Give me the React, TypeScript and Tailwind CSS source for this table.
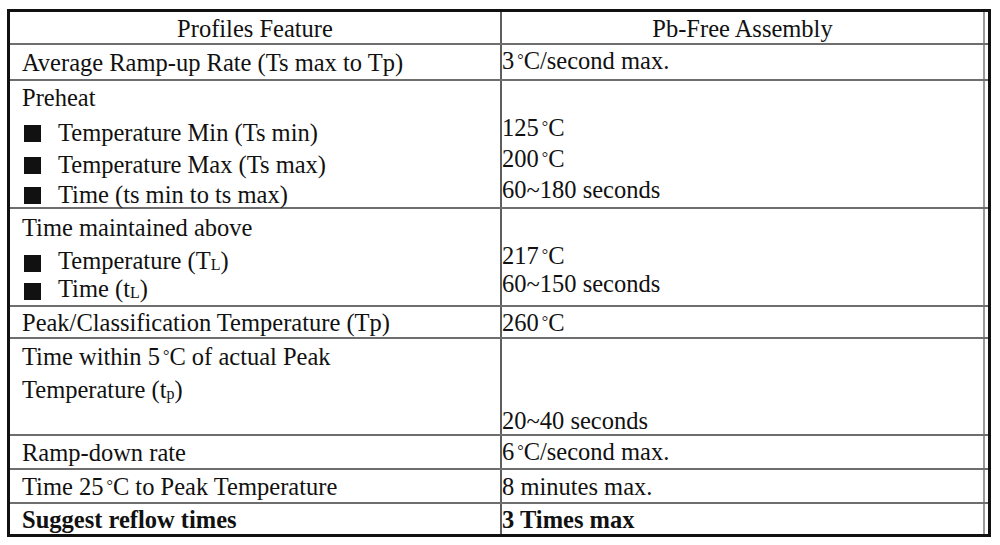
import React from "react";

const Deg = () => (
  <span className="pl-[3px]">
    <span className="text-[16px] relative -top-[4px]">°</span>
    <span>C</span>
  </span>
);

const Sub = ({ children }: { children: React.ReactNode }) => (
  <span className="text-[16px] relative top-[1px]">{children}</span>
);

const Bullet = ({ children }: { children: React.ReactNode }) => (
  <span className="flex items-center">
    <span className="inline-block w-[17px] h-[17px] bg-[#111] ml-[2px] mr-[17px] mt-[1px]" />
    <span>{children}</span>
  </span>
);

type Line = { h: number; c?: React.ReactNode };

const Cell = ({
  pt,
  lines,
  className,
}: {
  pt: number;
  lines: Line[];
  className?: string;
}) => (
  <div className={className}>
    <div style={{ height: pt }} />
    {lines.map((l, i) => (
      <div key={i} className="leading-[32px] whitespace-nowrap" style={{ height: l.h }}>
        {l.c}
      </div>
    ))}
  </div>
);

const Row = ({
  h,
  last,
  left,
  right,
}: {
  h: number;
  last?: boolean;
  left: { pt: number; lines: Line[] };
  right: { pt: number; lines: Line[] };
}) => (
  <div
    className={`flex ${last ? "" : "border-b-2 border-[#6e6e6e]"}`}
    style={{ height: h }}
  >
    <Cell
      pt={left.pt}
      lines={left.lines}
      className="w-[492px] shrink-0 border-r-2 border-[#5e5e5e] pl-[12px]"
    />
    <Cell
      pt={right.pt}
      lines={right.lines}
      className="flex-1 mr-[3px] border-r-2 border-[#9a9a9a]"
    />
  </div>
);

export default function App() {
  return (
    <div
      className="w-[1000px] h-[545px] bg-white pt-[9px] pl-[7px] text-[#111] text-[24.5px]"
      style={{ fontFamily: '"Liberation Serif", "Times New Roman", serif' }}
    >
      <div className="w-[984px] h-[528px] border-[3px] border-[#111] flex flex-col">
        {/* header */}
        <div className="flex border-b-2 border-[#6e6e6e] h-[33px]">
          <div className="w-[492px] shrink-0 border-r-2 border-[#5e5e5e] text-center leading-[32px] pt-[1px]">
            Profiles Feature
          </div>
          <div className="flex-1 mr-[3px] border-r-2 border-[#9a9a9a] text-center leading-[32px] pt-[1px]">
            Pb-Free Assembly
          </div>
        </div>
        <Row
          h={36}
          left={{ pt: 2, lines: [{ h: 32, c: "Average Ramp-up Rate (Ts max to Tp)" }] }}
          right={{ pt: 0, lines: [{ h: 32, c: <>3<Deg />/second max.</> }] }}
        />
        <Row
          h={128}
          left={{
            pt: 1,
            lines: [
              { h: 35, c: "Preheat" },
              { h: 32, c: <Bullet>Temperature Min (Ts min)</Bullet> },
              { h: 30, c: <Bullet>Temperature Max (Ts max)</Bullet> },
              { h: 30, c: <Bullet>Time (ts min to ts max)</Bullet> },
            ],
          }}
          right={{
            pt: 31,
            lines: [
              { h: 31, c: <>125<Deg /></> },
              { h: 31, c: <>200<Deg /></> },
              { h: 32, c: "60~180 seconds" },
            ],
          }}
        />
        <Row
          h={98}
          left={{
            pt: 3,
            lines: [
              { h: 33, c: "Time maintained above" },
              { h: 28, c: <Bullet>Temperature (T<Sub>L</Sub>)</Bullet> },
              { h: 32, c: <Bullet>Time (t<Sub>L</Sub>)</Bullet> },
            ],
          }}
          right={{
            pt: 31,
            lines: [
              { h: 28, c: <>217<Deg /></> },
              { h: 32, c: "60~150 seconds" },
            ],
          }}
        />
        <Row
          h={32}
          left={{ pt: 0, lines: [{ h: 30, c: "Peak/Classification Temperature (Tp)" }] }}
          right={{ pt: 0, lines: [{ h: 30, c: <>260<Deg /></> }] }}
        />
        <Row
          h={97}
          left={{
            pt: 2,
            lines: [
              { h: 33, c: <>Time within 5<Deg /> of actual Peak</> },
              { h: 32, c: <>Temperature (t<Sub>p</Sub>)</> },
            ],
          }}
          right={{ pt: 66, lines: [{ h: 29, c: "20~40 seconds" }] }}
        />
        <Row
          h={34}
          left={{ pt: 1, lines: [{ h: 31, c: "Ramp-down rate" }] }}
          right={{ pt: 0, lines: [{ h: 32, c: <>6<Deg />/second max.</> }] }}
        />
        <Row
          h={34}
          left={{ pt: 1, lines: [{ h: 31, c: <>Time 25<Deg /> to Peak Temperature</> }] }}
          right={{ pt: 1, lines: [{ h: 31, c: "8 minutes max." }] }}
        />
        <Row
          h={30}
          last
          left={{ pt: 0, lines: [{ h: 30, c: <b>Suggest reflow times</b> }] }}
          right={{ pt: 0, lines: [{ h: 30, c: <b>3 Times max</b> }] }}
        />
      </div>
    </div>
  );
}
